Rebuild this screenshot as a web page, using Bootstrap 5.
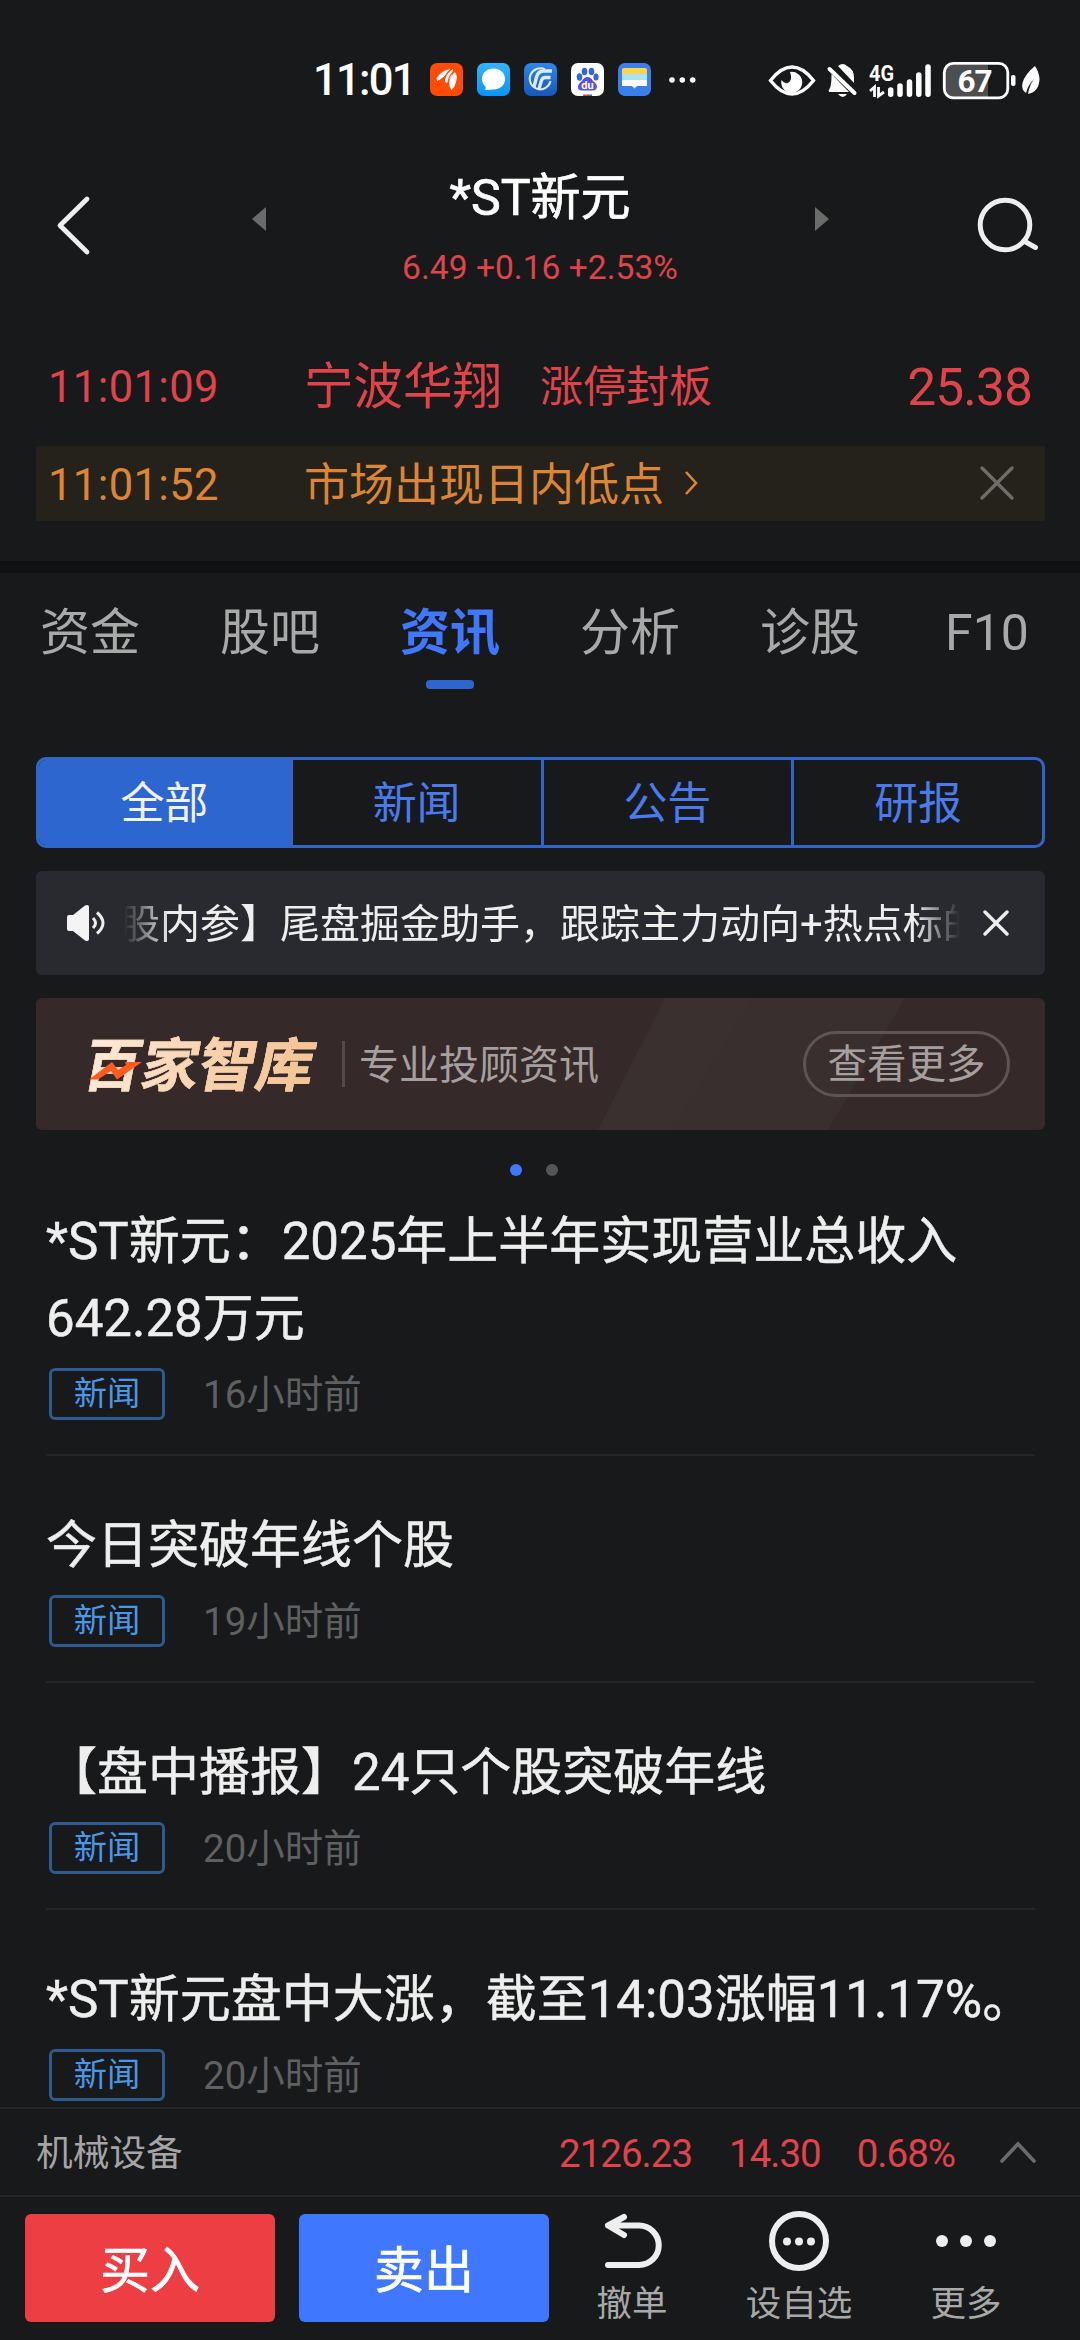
<!DOCTYPE html>
<html lang="zh-CN" data-bs-theme="dark">
<head>
<meta charset="utf-8">
<meta name="viewport" content="width=device-width, initial-scale=1">
<title>*ST新元 资讯</title>
<link href="https://cdn.jsdelivr.net/npm/bootstrap@5.3.0/dist/css/bootstrap.min.css" rel="stylesheet">
<style>
body{background:#17191a;color:#eee;font-family:Roboto,"Noto Sans CJK SC",sans-serif;width:1080px;height:2340px;overflow:hidden;line-height:1}
svg{display:block;flex:none}
.phone{height:2340px}
.phone span,.phone h1,.phone h2{white-space:nowrap;line-height:1}
.phone span{padding-top:.1em}
.up{color:#e0434a}
.status{height:160px;padding:0 40px 0 313px}
.phone .clock{font-size:43.5px;width:117px;color:#fff;letter-spacing:-1.7px;font-weight:500;padding-top:2px}
.apps{gap:14px}
.head{height:180px}
.quote-name{font-size:50px;font-weight:400;margin:13px 0 0;-webkit-text-stroke:.7px}
.quote-num{font-size:33.6px;padding-bottom:55px}
.tick{height:75px;margin:0 35px 0 36px;padding:0 13px 0 12px}
.tick-time{font-size:43.5px;width:256px;letter-spacing:.4px}
.tick-name{font-size:49.5px;width:236px}
.tick-tag{font-size:43px}
.tick-price{font-size:51.5px;letter-spacing:-.9px}
.warn{background:#25211b;color:#de8533}
.warn-text{font-size:45px}
.gapbar{height:12px;background:#101113}
.tabs{height:184px;padding-left:40px;font-size:50px;color:#a9a9a9}
.tabs .cell{height:116px;width:180px;flex:none}
.tabs .last{padding-left:5px}
.tabs .on{color:#3f78fd;font-weight:700}
.tabs .on i{width:48px;height:9px;border-radius:4px;background:#2e66d0;left:26px;bottom:0}
.seg{height:91px;margin:0 35px 0 36px;border:3px solid #3066c6;border-radius:10px;overflow:hidden}
.phone .seg span{width:25%;flex:none;font-size:44px;color:#4a7bee;border-left:3px solid #3066c6;line-height:85px;padding-top:2px;text-align:center}
.phone .seg .on{background:#2e66d0;color:#eef3ff;border-left:0}
.notice{height:104px;margin:23px 35px 0 36px;border-radius:6px;background:#292a2f;padding:0 36px 0 31px}
.marq{width:836px;font-size:40px;overflow:hidden;padding-top:4px;-webkit-mask-image:linear-gradient(90deg,transparent,#000 45px,#000 791px,transparent);mask-image:linear-gradient(90deg,transparent,#000 45px,#000 791px,transparent)}
.marq span{line-height:60px;margin-left:-4px}
.promo{height:132px;margin:23px 35px 0 36px;border-radius:6px;background:#352a29;overflow:hidden}
.promo-bg{left:0;top:0}
.brand{font-size:57.5px;font-weight:700;-webkit-text-stroke:.6px #f9d2ae;transform:skewX(-11deg);background:linear-gradient(90deg,#fdebdc,#f8cfa8 60%,#f5c391);-webkit-background-clip:text;background-clip:text;color:transparent}
.spark{left:53px;top:64px}
.slogan{font-size:40px;color:#a5a09f}
.phone .more{width:207px;height:66px;border:3px solid #5e5453;border-radius:33px;font-size:39.5px;color:#a5a09f;padding-top:3px}
.dots{height:80px;gap:24px;padding-right:12px}
.dots i{width:12px;height:12px;border-radius:50%;background:#545556}
.dots i.on{background:#3f78fd}
.news{height:906px;margin-top:-8px;padding:0 45px 0 46px;overflow:hidden}
.item{border-bottom:2px solid #242627;padding-bottom:34px;height:227px}
.item.two{height:254px}
.phone .item h2{font-size:51px;font-weight:400;line-height:77px;margin:auto 0 11px;white-space:normal;color:#eee;-webkit-text-stroke:.5px}
.phone .tag{width:116px;height:52px;border:3px solid #2f5a90;border-radius:6px;color:#4a97e8;font-size:33.3px;margin-left:3px;padding-top:1px}
.phone .ago{font-size:38.5px;color:#5f6061;margin-left:38px}
.index{height:88px;border-top:2px solid #252728;padding:0 44px 0 36px;font-size:38.5px;letter-spacing:-1px}
.index .nm{font-size:36.7px;color:#a5a5a5;letter-spacing:0}
.foot{height:145px;border-top:2px solid #252728;padding-left:25px}
.trade{width:250px;height:108px;border-radius:6px;margin-top:17px;font-size:50px;color:#fff;-webkit-text-stroke:.7px}
.buy{background:#ed3e43}
.sell{background:#3f78fe;margin-left:24px}
.act{font-size:35.5px;color:#a9a9a9;padding-top:14px}
.act svg{margin-bottom:12px}
</style>
</head>
<body>
<div class="phone d-flex flex-column">
  <div class="status d-flex align-items-center">
    <span class="clock">11:01</span>
    <div class="apps d-flex align-items-center">
      <svg width="33" height="33" viewBox="0 0 33 33"><rect width="33" height="33" rx="7" fill="#ff4a08"/><g fill="#fff"><path d="M7 18Q7 13 17 9Q14 15 7 18Z"/><path d="M6.500 15Q12 7 20 6Q15 14 7 18Z"/><path d="M15 17Q16 9 23 6Q23 12 17 20Q15 20 15 17Z"/><path d="M19 19Q21 12 25 9Q28 13 26 19Q25 24 21.500 27Q19 24 19 19Z"/></g><path d="M14 16Q17 9 22 6M18 19Q19 12 24.500 8" stroke="#ff4a08" stroke-width="1.100" fill="none"/></svg>
      <svg width="33" height="33" viewBox="0 0 33 33"><defs><linearGradient id="ga" x2="0" y2="1"><stop stop-color="#35b4fb"/><stop offset="1" stop-color="#0b94f8"/></linearGradient></defs><rect width="33" height="33" rx="7" fill="url(#ga)"/><path d="M16.500 5.500C23 5.500 28 10 28 16S23 26.500 16.500 26.500Q13 26.500 8 27Q9 25 8.500 23.500Q5 20.500 5 16C5 10 10 5.500 16.500 5.500Z" fill="#fff"/></svg>
      <svg width="33" height="33" viewBox="0 0 33 33"><defs><linearGradient id="gb" x2="0" y2="1"><stop stop-color="#2f86ee"/><stop offset="1" stop-color="#1558b8"/></linearGradient></defs><rect width="33" height="33" rx="7" fill="url(#gb)"/><g fill="none" stroke="#dcebff"><path d="M21 6.500A10.500 10.500 0 1 0 26.500 18" stroke-width="2"/><path d="M28 8H20Q14 8 12.500 14L10 24" stroke-width="3.400"/><path d="M26.500 14.500H21Q18 14.500 17 19L15 26" stroke-width="3.400"/></g></svg>
      <svg width="33" height="33" viewBox="0 0 33 33"><rect width="33" height="33" rx="7" fill="#fff"/><g fill="#2f66d8"><ellipse cx="8.500" cy="14" rx="2.800" ry="3.700"/><ellipse cx="13.500" cy="8.500" rx="2.800" ry="3.800"/><ellipse cx="20.500" cy="8.500" rx="2.800" ry="3.800"/><ellipse cx="25" cy="14" rx="2.600" ry="3.600"/></g><path d="M16.500 14Q20 14 22 18Q26 21 26 24Q25 28 21 27.500H12Q7 28 7 24Q7 21 11 18Q13 14 16.500 14Z" fill="#5a4fe0"/><text x="16.500" y="26" font-size="11" font-weight="700" text-anchor="middle" fill="#fff">du</text><path d="M12 31.500h5v1.500h-5z" fill="#e04040"/><path d="M17 31.500h4v1.500h-4z" fill="#3f60d0"/></svg>
      <svg width="33" height="33" viewBox="0 0 33 33"><rect width="33" height="33" rx="7" fill="#3a80ea"/><path d="M4 7q0-2 2-2h21q2 0 2 2v5H4z" fill="#fbd54e"/><path d="M4 11h25v6H4z" fill="#a9e4f5"/><path d="M4 17h25v6H19l-2.500 2.500L14 23H4z" fill="#fff"/></svg>
      <svg class="ms-1" width="28" height="8" viewBox="0 0 28 8"><g fill="#fff"><circle cx="3" cy="4" r="2.800"/><circle cx="13.300" cy="4" r="2.800"/><circle cx="23.700" cy="4" r="2.800"/></g></svg>
    </div>
    <svg class="ms-auto" width="274" height="40" viewBox="766 60 274 40">
      <path d="M770.500 80.500Q781 67 792 67T813.500 80.500Q803 94 792 94T770.500 80.500Z" fill="none" stroke="#fff" stroke-width="3.400"/>
      <path d="M790 72A10.500 10.500 0 1 1 781.500 80Q784 84 788 83Q793 80 790 72Z" fill="#fff"/>
      <g fill="#fff"><path d="M838 66Q843 62 847 66Q854 69 854 78V83Z"/><path d="M831.500 74L847 90L849 92H829Q828 90 830 88Q831.500 85 831.500 74Z"/><path d="M838 94H847Q843 100 838 94Z"/></g><path d="M829.500 69L854.500 93" stroke="#fff" stroke-width="4" stroke-linecap="round"/>
      <text x="869" y="80.500" font-size="22.500" font-weight="700" textLength="25" lengthAdjust="spacingAndGlyphs" fill="#fff">4G</text>
      <path d="M870 91L874.500 87V97M878.500 87V96L884 92" fill="none" stroke="#fff" stroke-width="2.800"/>
      <g stroke="#fff" stroke-width="5.500" stroke-linecap="round"><path d="M890.700 90V94.300M900 86V94.300M909.500 82V94.300M918.800 75V94.300M928 67V94.300"/></g>
      <path d="M952 65H988V97H952Q945 97 945 90V72Q945 65 952 65Z" fill="#4d4e4f"/>
      <rect x="944.300" y="63.300" width="63.500" height="34.500" rx="9" fill="none" stroke="#fff" stroke-width="2.800"/>
      <text x="975" y="91.500" font-size="31.500" font-weight="700" text-anchor="middle" textLength="35" fill="#fff">67</text>
      <rect x="1011" y="75" width="4.500" height="11" rx="2" fill="#fff"/>
      <path d="M1035 66Q1039 72 1039.500 79Q1039 92 1028 94Q1029 86 1034 79Q1028 85 1026 93Q1021 90 1022.500 83Q1025 74 1035 66Z" fill="#fff"/>
    </svg>
  </div>

  <div class="head d-flex justify-content-between">
    <svg width="200" height="130" viewBox="0 160 200 130"><path d="M87 199L60 225.500L87 252" fill="none" stroke="#eee" stroke-width="4.800" stroke-linecap="round" stroke-linejoin="round"/></svg>
    <svg width="70" height="130" viewBox="200 160 70 130"><path d="M266 207V231L252 219Z" fill="#6b6b6b"/></svg>
    <div class="flex-fill d-flex flex-column align-items-center"><h1 class="quote-name">*ST新元</h1><span class="quote-num up mt-auto">6.49 +0.16 +2.53%</span></div>
    <svg width="70" height="130" viewBox="810 160 70 130"><path d="M815 207V231L829 219Z" fill="#6b6b6b"/></svg>
    <svg width="200" height="130" viewBox="880 160 200 130"><g fill="none" stroke="#eee" stroke-width="5" stroke-linecap="round"><circle cx="1005" cy="225" r="24.800"/><path d="M1024 241L1035.500 247.500"/></g></svg>
  </div>

  <div class="tick d-flex align-items-center up" style="margin-top:8px"><span class="tick-time">11:01:09</span><span class="tick-name">宁波华翔</span><span class="tick-tag">涨停封板</span><span class="tick-price ms-auto">25.38</span></div>
  <div class="tick warn d-flex align-items-center" style="margin-top:23px"><span class="tick-time">11:01:52</span><span class="warn-text">市场出现日内低点</span>
    <svg width="16" height="26" viewBox="0 0 16 26" style="margin-left:20px"><path d="M2 2L12 13L2 24" fill="none" stroke="#de8533" stroke-width="2.600"/></svg>
    <svg class="ms-auto me-3" width="38" height="36" viewBox="0 0 38 36"><path d="M4 3L34 33M34 3L4 33" stroke="#6e6c68" stroke-width="3.400" stroke-linecap="round"/></svg>
  </div>
  <div class="gapbar" style="margin-top:40px"></div>

  <div class="tabs d-flex">
    <div class="cell d-flex align-items-center"><span>资金</span></div>
    <div class="cell d-flex align-items-center"><span>股吧</span></div>
    <div class="cell d-flex align-items-center position-relative on"><span>资讯</span><i class="position-absolute"></i></div>
    <div class="cell d-flex align-items-center"><span>分析</span></div>
    <div class="cell d-flex align-items-center"><span>诊股</span></div>
    <div class="cell last d-flex align-items-center"><span>F10</span></div>
  </div>

  <div class="seg d-flex"><span class="on">全部</span><span>新闻</span><span>公告</span><span>研报</span></div>

  <div class="notice d-flex align-items-center">
    <svg width="40" height="38" viewBox="0 0 40 38"><path d="M0 13Q0 11 2 11H6L18 1.500Q22 0 22 3V35Q22 38 18 36.500L6 27H2Q0 27 0 25Z" fill="#f4f4f4"/><path d="M26 14Q31 19 26 24M30 8.500Q42 19 30 29.500" fill="none" stroke="#eee" stroke-width="3"/></svg>
    <div class="marq" style="margin-left:17px"><span>股内参】尾盘掘金助手，跟踪主力动向+热点标的</span></div>
    <svg class="ms-auto" width="26" height="26" viewBox="0 0 26 26"><path d="M2 2L24 24M24 2L2 24" stroke="#eee" stroke-width="3.400" stroke-linecap="round"/></svg>
  </div>

  <div class="promo d-flex align-items-center position-relative">
    <svg class="promo-bg position-absolute" width="1009" height="132" viewBox="0 0 1009 132"><path d="M629 0H869L792 132H562Z" fill="#fff" fill-opacity=".022"/><path d="M629 0H715L635 132H562Z" fill="#fff" fill-opacity=".008"/></svg>
    <span class="brand position-relative" style="margin-left:49px">百家智库</span>
    <svg class="spark position-absolute" width="53" height="18" viewBox="0 0 53 18"><path d="M0 17.500L23 0L29 8L37 3L36 0H53L28 17.500L22 9L9 17.500Z" fill="#ff5a1f"/></svg>
    <svg width="3" height="46" viewBox="0 0 3 46" style="margin-left:27px"><path d="M1.500 0V46" stroke="#554a49" stroke-width="3"/></svg>
    <span class="slogan position-relative" style="margin-left:14px">专业投顾资讯</span>
    <span class="more d-flex align-items-center justify-content-center ms-auto position-relative" style="margin-right:35px">查看更多</span>
  </div>

  <div class="dots d-flex align-items-center justify-content-center"><i class="on"></i><i></i></div>

  <div class="news">
    <div class="item two d-flex flex-column"><h2>*ST新元：2025年上半年实现营业总收入642.28万元</h2><div class="d-flex align-items-center"><span class="tag d-flex align-items-center justify-content-center">新闻</span><span class="ago">16小时前</span></div></div>
    <div class="item d-flex flex-column"><h2>今日突破年线个股</h2><div class="d-flex align-items-center"><span class="tag d-flex align-items-center justify-content-center">新闻</span><span class="ago">19小时前</span></div></div>
    <div class="item d-flex flex-column"><h2>【盘中播报】24只个股突破年线</h2><div class="d-flex align-items-center"><span class="tag d-flex align-items-center justify-content-center">新闻</span><span class="ago">20小时前</span></div></div>
    <div class="item d-flex flex-column"><h2>*ST新元盘中大涨，截至14:03涨幅11.17%。</h2><div class="d-flex align-items-center"><span class="tag d-flex align-items-center justify-content-center">新闻</span><span class="ago">20小时前</span></div></div>
  </div>

  <div class="index d-flex align-items-center up"><span class="nm me-auto">机械设备</span><span>2126.23</span><span style="margin-left:37px">14.30</span><span style="margin-left:36px">0.68%</span>
    <svg width="36" height="22" viewBox="0 0 36 22" style="margin-left:45px"><path d="M2 20L18 3L34 20" fill="none" stroke="#6b6b6b" stroke-width="3.600" stroke-linecap="round"/></svg></div>

  <div class="foot d-flex align-items-start">
    <span class="trade buy d-flex align-items-center justify-content-center">买入</span>
    <span class="trade sell d-flex align-items-center justify-content-center">卖出</span>
    <div class="act d-flex flex-column align-items-center" style="width:166px"><svg width="60" height="60" viewBox="602 2211 60 60"><g fill="none" stroke="#eee" stroke-width="6" stroke-linecap="round" stroke-linejoin="round"><path d="M624 2217L608 2225.500L624 2235M608 2225.500H639A19.700 19.700 0 0 1 639 2265H608"/></g></svg><span>撤单</span></div>
    <div class="act d-flex flex-column align-items-center" style="width:168px"><svg width="60" height="60" viewBox="769 2211 60 60"><circle cx="799" cy="2241" r="27" fill="none" stroke="#eee" stroke-width="6"/><g fill="#eee"><circle cx="787" cy="2241.500" r="4"/><circle cx="799" cy="2241.500" r="4"/><circle cx="811" cy="2241.500" r="4"/></g></svg><span>设自选</span></div>
    <div class="act d-flex flex-column align-items-center" style="width:166px"><svg width="60" height="60" viewBox="936 2211 60 60"><g fill="#eee"><circle cx="942" cy="2241" r="6"/><circle cx="966" cy="2241" r="6"/><circle cx="990" cy="2241" r="6"/></g></svg><span>更多</span></div>
  </div>
</div>
<script src="https://cdn.jsdelivr.net/npm/bootstrap@5.3.0/dist/js/bootstrap.bundle.min.js"></script>
</body>
</html>
